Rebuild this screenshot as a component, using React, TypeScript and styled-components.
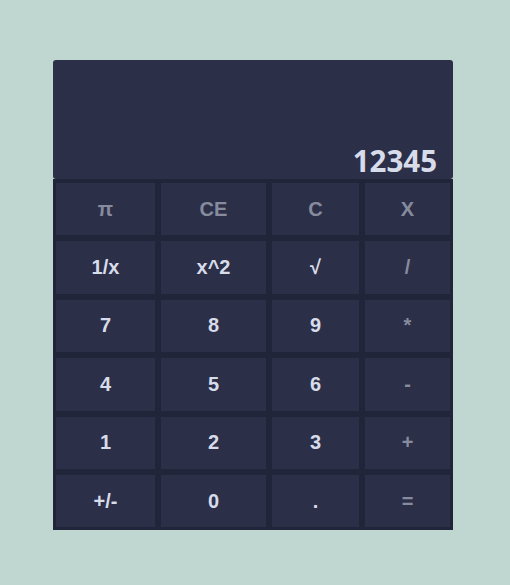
import React from "react";
import styled, { createGlobalStyle } from "styled-components";

const Global = createGlobalStyle`
  html, body { margin: 0; padding: 0; background: #c0d6d0; }
  body { width: 510px; height: 585px; overflow: hidden; }
`;

const Page = styled.div`
  padding: 60px 0 0 53px;
`;

const Calculator = styled.div`
  width: 400px;
  display: flex;
  flex-direction: column;
`;

const Display = styled.div`
  height: 119px;
  background: #2c2f48;
  border-radius: 3px;
  display: flex;
  align-items: flex-end;
  justify-content: flex-end;
  padding: 0 16px 4px 0;
  box-sizing: border-box;
  font-family: "Open Sans", sans-serif;
  font-weight: 700;
  font-size: 29.5px;
  line-height: 1;
  color: #d7dcea;
`;

const Keypad = styled.div`
  background: #21253a;
  padding: 4px 3px 3px 3px;
  display: grid;
  grid-template-columns: 99px 105px 87px 85px;
  grid-auto-rows: 52.4px;
  column-gap: 6px;
  row-gap: 6px;
`;

const Key = styled.button<{ $muted?: boolean }>`
  border: none;
  margin: 0;
  padding: 0;
  background: #2c2f48;
  color: ${(p) => (p.$muted ? "#868b9e" : "#d7dcea")};
  font-family: "Liberation Sans", Arial, sans-serif;
  font-weight: 700;
  font-size: 20px;
  display: flex;
  align-items: center;
  justify-content: center;
  cursor: pointer;
`;

const keys: { label: string; muted?: boolean }[] = [
  { label: "π", muted: true },
  { label: "CE", muted: true },
  { label: "C", muted: true },
  { label: "X", muted: true },
  { label: "1/x" },
  { label: "x^2" },
  { label: "√" },
  { label: "/", muted: true },
  { label: "7" },
  { label: "8" },
  { label: "9" },
  { label: "*", muted: true },
  { label: "4" },
  { label: "5" },
  { label: "6" },
  { label: "-", muted: true },
  { label: "1" },
  { label: "2" },
  { label: "3" },
  { label: "+", muted: true },
  { label: "+/-" },
  { label: "0" },
  { label: "." },
  { label: "=", muted: true },
];

export default function App() {
  return (
    <>
      <Global />
      <Page>
        <Calculator>
          <Display>12345</Display>
          <Keypad>
            {keys.map((k) => (
              <Key key={k.label} $muted={k.muted}>
                {k.label}
              </Key>
            ))}
          </Keypad>
        </Calculator>
      </Page>
    </>
  );
}
